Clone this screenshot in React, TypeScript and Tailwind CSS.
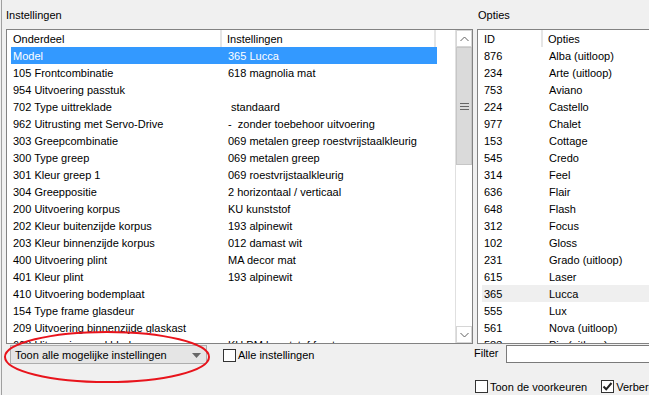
import React from "react";

const settings: [string, string][] = [
  ["Model", "365 Lucca"],
  ["105 Frontcombinatie", "618 magnolia mat"],
  ["954 Uitvoering passtuk", ""],
  ["702 Type uittreklade", " standaard"],
  ["962 Uitrusting met Servo-Drive", "-  zonder toebehoor uitvoering"],
  ["303 Greepcombinatie", "069 metalen greep roestvrijstaalkleurig"],
  ["300 Type greep", "069 metalen greep"],
  ["301 Kleur greep 1", "069 roestvrijstaalkleurig"],
  ["304 Greeppositie", "2 horizontaal / verticaal"],
  ["200 Uitvoering korpus", "KU kunststof"],
  ["202 Kleur buitenzijde korpus", "193 alpinewit"],
  ["203 Kleur binnenzijde korpus", "012 damast wit"],
  ["400 Uitvoering plint", "MA decor mat"],
  ["401 Kleur plint", "193 alpinewit"],
  ["410 Uitvoering bodemplaat", ""],
  ["154 Type frame glasdeur", ""],
  ["209 Uitvoering binnenzijde glaskast", ""],
  ["600 Uitvoering werkblad", "KU PM kunststof front"],
];

const options: [string, string][] = [
  ["876", "Alba (uitloop)"],
  ["234", "Arte (uitloop)"],
  ["753", "Aviano"],
  ["224", "Castello"],
  ["977", "Chalet"],
  ["153", "Cottage"],
  ["545", "Credo"],
  ["314", "Feel"],
  ["636", "Flair"],
  ["648", "Flash"],
  ["312", "Focus"],
  ["102", "Gloss"],
  ["231", "Grado (uitloop)"],
  ["615", "Laser"],
  ["365", "Lucca"],
  ["555", "Lux"],
  ["561", "Nova (uitloop)"],
  ["583", "Pia (uitloop)"],
];

function Checkbox({ checked = false }: { checked?: boolean }) {
  return (
    <div className="w-[13px] h-[13px] border border-[#333333] bg-white flex items-center justify-center shrink-0">
      {checked && (
        <svg width="11" height="11" viewBox="0 0 11 11">
          <path d="M1.5 5.5 L4.2 8.3 L9.5 2" fill="none" stroke="#222" strokeWidth="2" />
        </svg>
      )}
    </div>
  );
}

function Chevron({ up }: { up?: boolean }) {
  return (
    <svg width="9" height="6" viewBox="0 0 9 6">
      <path
        d={up ? "M0.5 5 L4.5 1 L8.5 5" : "M0.5 1 L4.5 5 L8.5 1"}
        fill="none"
        stroke="#606060"
        strokeWidth="1"
      />
    </svg>
  );
}

export default function App() {
  return (
    <div
      className="w-[649px] h-[395px] bg-[#f0f0f0] overflow-hidden relative text-[11px] text-black"
      style={{ fontFamily: '"Liberation Sans", Arial, sans-serif' }}
    >
      <div className="flex h-full ml-[1px] border-l border-[#a0a0a0]">
        {/* Instellingen */}
        <div className="flex flex-col ml-[4px]">
          <div className="h-[29px] flex items-center pt-[1px]">Instellingen</div>
          <div className="w-[467px] h-[315px] border border-[#828282] bg-white flex">
            <div className="w-[448px] flex flex-col overflow-hidden">
              <div className="h-[17px] flex shrink-0 items-center">
                <div className="w-[215px] h-full pl-[6px] pt-[1px] flex items-center border-r-2 border-[#e5e5e5]">
                  Onderdeel
                </div>
                <div className="w-[214px] h-full pl-[5px] pt-[1px] flex items-center border-r-2 border-[#e5e5e5]">
                  Instellingen
                </div>
              </div>
              <div className="pl-[4px]">
                {settings.map(([a, b], i) => (
                  <div
                    key={i}
                    className={`w-[426px] h-[17px] pt-[1px] flex items-center whitespace-pre ${
                      i === 0 ? "bg-[#3399ff] text-white" : ""
                    }`}
                  >
                    <div className="w-[215px] pl-[2px] shrink-0">{a}</div>
                    <div className="pl-[2px]">{b}</div>
                  </div>
                ))}
              </div>
            </div>
            <div className="w-[17px] flex flex-col bg-white border-l border-[#e0e0e0]">
              <div className="h-[17px] flex items-center justify-center border border-[#d6d6d6] shrink-0">
                <Chevron up />
              </div>
              <div className="h-[118px] bg-[#dadada] border border-[#c6c6c6] flex items-center justify-center">
                <svg width="9" height="7" viewBox="0 0 9 7">
                  <path d="M0 0.5 H9 M0 3.5 H9 M0 6.5 H9" stroke="#666" strokeWidth="1" />
                </svg>
              </div>
              <div className="flex-1" />
              <div className="h-[17px] flex items-center justify-center border border-[#d6d6d6] shrink-0">
                <Chevron />
              </div>
            </div>
          </div>
          <div className="flex items-start mt-[1px]">
            <div className="ml-[4px] w-[197px] h-[19px] bg-[#e5e5e5] border border-[#adadad] flex items-center justify-between pl-[4px] pr-[5px] pt-[1px]">
              <span>Toon alle mogelijke instellingen</span>
              <svg width="9" height="5" viewBox="0 0 9 5">
                <path d="M0 0 H9 L4.5 5 Z" fill="#666" />
              </svg>
            </div>
            <div className="ml-[16px] mt-[2px] flex items-center gap-[2px]">
              <Checkbox />
              <span>Alle instellingen</span>
            </div>
          </div>
        </div>

        {/* Opties */}
        <div className="flex flex-col ml-[1px] w-[230px] shrink-0">
          <div className="h-[29px] flex items-center pl-[4px] pt-[1px]">Opties</div>
          <div className="ml-[3px] w-[200px] h-[315px] border border-[#828282] bg-white flex flex-col overflow-hidden">
            <div className="h-[17px] flex shrink-0 items-center">
              <div className="w-[65px] h-full pl-[6px] pt-[1px] flex items-center border-r-2 border-[#e5e5e5]">ID</div>
              <div className="w-[130px] h-full pl-[5px] pt-[1px] flex items-center border-r-2 border-[#e5e5e5]">Opties</div>
            </div>
            <div className="pl-[4px]">
              {options.map(([id, name], i) => (
                <div
                  key={i}
                  className={`h-[17px] pt-[1px] flex items-center ${name === "Lucca" ? "bg-[#efefef]" : ""}`}
                >
                  <div className="w-[65px] pl-[2px] shrink-0">{id}</div>
                  <div className="pl-[2px]">{name}</div>
                </div>
              ))}
            </div>
          </div>
          <div className="flex items-center mt-[1px] h-[18px]">
            <span className="w-[32px]">Filter</span>
            <div className="w-[200px] h-[18px] bg-white border border-[#7a7a7a]" />
          </div>
          <div className="flex items-center mt-[16px]">
            <div className="flex items-center gap-[2px] ml-[1px]">
              <Checkbox />
              <span>Toon de voorkeuren</span>
            </div>
            <div className="flex items-center gap-[2px] ml-[14px]">
              <Checkbox checked />
              <span>Verbergen</span>
            </div>
          </div>
        </div>
      </div>

      {/* red annotation */}
      <svg className="absolute left-[1px] top-[329px]" width="212" height="58" viewBox="0 0 212 58">
        <ellipse cx="106" cy="28" rx="102" ry="25" fill="none" stroke="#e8141c" strokeWidth="2" />
      </svg>
    </div>
  );
}
